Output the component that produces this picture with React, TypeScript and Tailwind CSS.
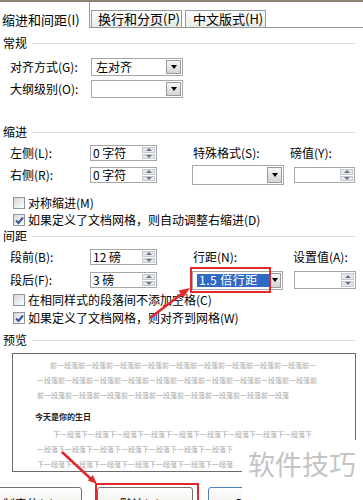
import React from "react";

// 预览区里的灰色示例文字
const prevLines = [
  { text: "前一段落".repeat(9) + "前一", pad: "pl-[37px]" },
  { text: "一段落前".repeat(10), pad: "pl-[24px]" },
  { text: "前一段落".repeat(9), pad: "pl-[24px]" },
];
// 后两行被水印挡住，只画到水印左边
const nextLines = [
  { text: "下一段落".repeat(9) + "下", pad: "pl-[40px]" },
  { text: "一段落下".repeat(7), pad: "pl-[24px]" },
  { text: "下一段落".repeat(7), pad: "pl-[24px]" },
];

const SectionHeader = ({ title, className }: { title: string; className?: string }) => (
  <div className={`flex items-center h-[14px] ${className ?? ""}`}>
    <span className="pl-[3px] text-[12px] leading-[14px]">{title}</span>
    <div className="ml-[5px] mr-[8px] flex-1 h-px bg-[#dcdcdc]" />
  </div>
);

const DropButton = ({ className }: { className?: string }) => (
  <div
    className={`flex items-center justify-center border border-[#9a9a9a] bg-linear-to-b from-[#f6f6f6] to-[#d4d4d4] ${className ?? "w-[15px]"}`}
  >
    <div className="w-0 h-0 border-l-[3px] border-r-[3px] border-t-[4px] border-l-transparent border-r-transparent border-t-black" />
  </div>
);

const Select = ({
  value,
  className,
  children,
  buttonClass,
}: {
  value?: string;
  className: string;
  children?: React.ReactNode;
  buttonClass?: string;
}) => (
  <div className={`flex border border-[#a7a7a7] bg-white p-px ${className}`}>
    <div className="flex-1 pl-[3px] text-[12px] leading-[14px] flex items-center whitespace-nowrap">
      {children ?? value}
    </div>
    <DropButton className={buttonClass} />
  </div>
);

const Spin = ({ value, className }: { value?: string; className: string }) => (
  <div className={`flex border border-[#a7a7a7] bg-white ${className}`}>
    <div className="flex-1 pl-[2px] text-[12px] leading-[14px] flex items-center whitespace-pre">
      {value}
    </div>
    <div className="w-[13px] m-px flex flex-col gap-px">
      <div className="flex-1 flex items-center justify-center bg-[#e4e7ec] border border-[#c4c9d0]">
        <div className="w-0 h-0 border-l-[3px] border-r-[3px] border-b-[3px] border-l-transparent border-r-transparent border-b-[#6c7480]" />
      </div>
      <div className="flex-1 flex items-center justify-center bg-[#e4e7ec] border border-[#c4c9d0]">
        <div className="w-0 h-0 border-l-[3px] border-r-[3px] border-t-[3px] border-l-transparent border-r-transparent border-t-[#6c7480]" />
      </div>
    </div>
  </div>
);

const Check = ({ checked, label, className }: { checked?: boolean; label: string; className?: string }) => (
  <div className={`flex items-center h-[14px] ${className ?? ""}`}>
    <div className="ml-[13px] w-[12px] h-[12px] border border-[#8d96a0] bg-linear-to-br from-[#d8d8d8] to-white flex items-center justify-center">
      {checked && (
        <svg width="9" height="9" viewBox="0 0 9 9">
          <path d="M1 4.5 L3.5 7 L8 1.5" fill="none" stroke="#3a5591" strokeWidth="2" />
        </svg>
      )}
    </div>
    <span className="ml-[3px] text-[12px] leading-[14px] whitespace-nowrap">{label}</span>
  </div>
);

const Label = ({ text, className }: { text: string; className: string }) => (
  <span className={`text-[12px] leading-[14px] whitespace-nowrap shrink-0 ${className}`}>{text}</span>
);

export default function App() {
  return (
    <div className="relative w-[363px] h-[500px] overflow-hidden bg-white text-black font-['Noto_Sans_CJK_SC','Liberation_Sans',sans-serif]">
      {/* 选项卡 */}
      <div className="flex h-[28px] border-t-2 border-[#8a8275]">
        <div className="w-[90px] shrink-0 border-r border-[#919b9c] bg-white pl-[2px] pt-[10px] text-[13px] leading-[15px] whitespace-nowrap">
          缩进和间距(I)
        </div>
        <div className="flex-1 flex items-end border-b border-[#919b9c]">
          <div className="ml-px w-[91px] h-[17px] border border-b-0 border-[#919b9c] bg-linear-to-b from-white to-[#e9e9e4] pl-[6px] text-[13px] leading-[16px] whitespace-nowrap">
            换行和分页(P)
          </div>
          <div className="ml-[3px] w-[81px] h-[17px] border border-b-0 border-[#919b9c] bg-linear-to-b from-white to-[#e9e9e4] pl-[7px] text-[13px] leading-[16px] whitespace-nowrap">
            中文版式(H)
          </div>
        </div>
      </div>

      {/* 常规 */}
      <SectionHeader title="常规" className="mt-[8px]" />
      <div className="mt-[8px] flex items-center h-[18px]">
        <Label text="对齐方式(G):" className="ml-[10px] w-[81px]" />
        <Select value="左对齐" className="w-[92px] h-[18px]" />
      </div>
      <div className="mt-[4px] flex items-center h-[18px]">
        <Label text="大纲级别(O):" className="ml-[10px] w-[81px]" />
        <Select value="" className="w-[92px] h-[18px]" />
      </div>

      {/* 缩进 */}
      <SectionHeader title="缩进" className="mt-[27px]" />
      <div className="mt-[6px] flex items-center h-[16px]">
        <Label text="左侧(L):" className="ml-[10px] w-[80px]" />
        <Spin value="0 字符" className="w-[67px] h-[16px]" />
        <Label text="特殊格式(S):" className="ml-[36px] w-[97px]" />
        <Label text="磅值(Y):" className="" />
      </div>
      <div className="mt-[4px] flex items-center h-[20px]">
        <Label text="右侧(R):" className="ml-[10px] w-[80px]" />
        <Spin value="0 字符" className="w-[67px] h-[16px]" />
        <Select value="" className="ml-[35px] w-[92px] h-[20px]" />
        <Spin value="" className="ml-[10px] w-[61px] h-[16px]" />
      </div>
      <Check label="对称缩进(M)" className="mt-[11px]" />
      <Check checked label="如果定义了文档网格，则自动调整右缩进(D)" className="mt-[3px]" />

      {/* 间距 */}
      <SectionHeader title="间距" className="mt-[2px]" />
      <div className="mt-[6px] flex items-center h-[16px]">
        <Label text="段前(B):" className="ml-[10px] w-[80px]" />
        <Spin value="12 磅" className="w-[67px] h-[16px]" />
        <Label text="行距(N):" className="ml-[36px] w-[100px]" />
        <Label text="设置值(A):" className="" />
      </div>
      <div className="mt-[5px] flex items-center h-[20px]">
        <Label text="段后(F):" className="ml-[10px] w-[80px]" />
        <Spin value="3 磅" className="w-[67px] h-[16px]" />
        <div className="relative ml-[35px]">
          <Select className="w-[91px] h-[19px]" buttonClass="w-[13px]">
            <span className="bg-[#316ac5] text-white w-[72px] h-[13px] flex items-center pl-[2px] text-[12px] tracking-[0.5px]">
              1.5 倍行距
            </span>
          </Select>
          <div className="absolute -left-[2px] -top-[4px] w-[81px] h-[26px] border-2 border-[#e0282d]" />
        </div>
        <Spin value="" className="ml-[11px] w-[62px] h-[18px]" />
      </div>
      <Check label="在相同样式的段落间不添加空格(C)" className="mt-[3px]" />
      <Check checked label="如果定义了文档网格，则对齐到网格(W)" className="mt-[4px]" />

      {/* 预览 */}
      <SectionHeader title="预览" className="mt-[8px]" />
      <div className="mt-[6px] ml-[12px] w-[344px] h-[119px] border border-[#6b6b6b] bg-white pt-[4px] overflow-hidden">
        {prevLines.map((l, i) => (
          <div key={i} className={`${l.pad} h-[15px] flex items-center text-[7px] leading-[7px] text-[#a9a9a9] whitespace-nowrap`}>
            {l.text}
          </div>
        ))}
        <div className="mt-[6px] pl-[22px] h-[15px] flex items-center text-[8px] leading-[8px] font-bold text-[#222] whitespace-nowrap">
          今天是你的生日
        </div>
        <div className="mt-[3px]">
          {nextLines.map((l, i) => (
            <div key={i} className={`${l.pad} h-[15px] flex items-center text-[7px] leading-[7px] text-[#a9a9a9] whitespace-nowrap`}>
              {l.text}
            </div>
          ))}
        </div>
      </div>

      {/* 底部按钮 */}
      <div className="mt-[15px] flex items-start h-[23px]">
        <div className="-ml-[15px] w-[97px] h-[23px] shrink-0 rounded-[3px] border border-[#707070] bg-linear-to-b from-white to-[#ecebe6] pt-[9px] text-center text-[12px] leading-[14px]">
          制表位(T)...
        </div>
        <div className="relative ml-[15px] shrink-0">
          <div className="w-[96px] h-[23px] rounded-[3px] border border-[#707070] bg-linear-to-b from-white to-[#ecebe6] pt-[9px] text-center text-[12px] leading-[14px]">
            默认(D)...
          </div>
          <div className="absolute -left-[2px] -top-[4px] w-[104px] h-[30px] border-2 border-[#e0282d]" />
        </div>
        <div className="ml-[15px] w-[80px] h-[23px] shrink-0 rounded-[3px] border border-[#4f7fc4] bg-linear-to-b from-white to-[#ecebe6] pt-[9px] text-center text-[12px] leading-[14px]">
          确定
        </div>
      </div>

      {/* 水印 */}
      <div className="absolute left-[242px] top-[440px] w-[121px] h-[60px] bg-white pl-[6px] pt-[10px] text-[27px] leading-[28px] text-[#c4c4c4] whitespace-nowrap">
        软件技巧
      </div>

      {/* 红色箭头 */}
      <svg className="absolute left-0 top-0 pointer-events-none" width="363" height="500">
        <line x1="150" y1="318" x2="183" y2="293" stroke="#e0282d" strokeWidth="2.5" />
        <polygon points="190,288 183.5,297.5 178.5,290.5" fill="#e0282d" />
        <line x1="62" y1="452" x2="91" y2="479" stroke="#e0282d" strokeWidth="2.5" />
        <polygon points="97,484 92.8,475 87.8,480.5" fill="#e0282d" />
      </svg>
    </div>
  );
}
